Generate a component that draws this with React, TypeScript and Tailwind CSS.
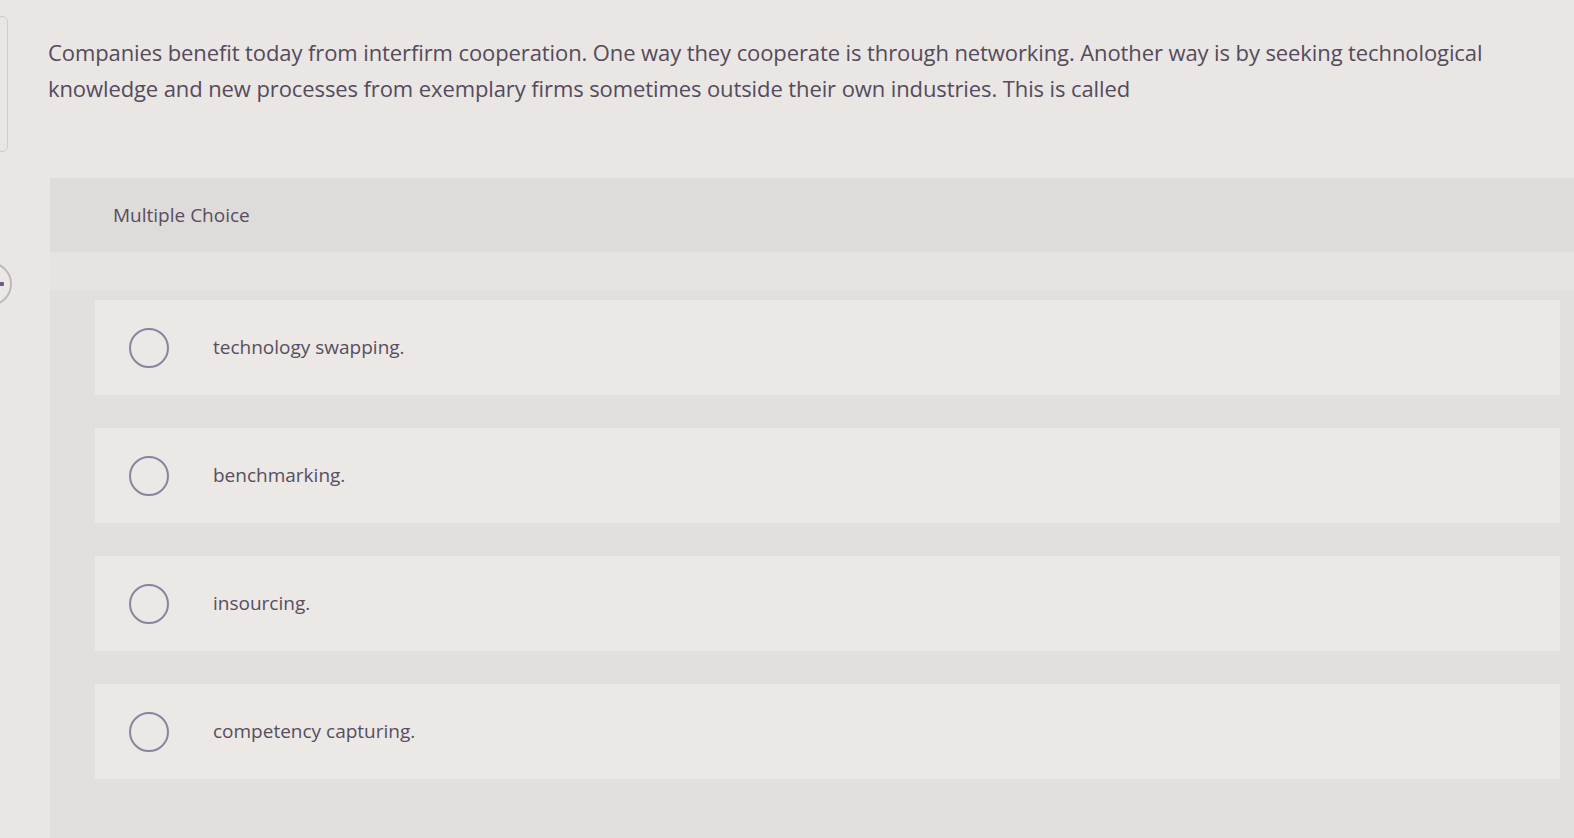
import React from 'react';

const options = [
    'technology swapping.',
    'benchmarking.',
    'insourcing.',
    'competency capturing.',
];

const Radio: React.FC = () => (
    <span className="block w-[40px] h-[40px] rounded-full border-2 border-[#8b84a0] shrink-0" />
);

export default function App() {
    return (
        <div
            className="relative w-full h-[838px] overflow-hidden bg-[#e9e6e4] text-[#544b5c]"
            style={{ fontFamily: '"Open Sans", Lato, sans-serif' }}
        >
            {/* left edge bits of the page behind */}
            <div className="absolute left-[-20px] top-[16px] w-[28px] h-[136px] rounded-[6px] border border-[#cfcbcb]" />
            <div className="absolute left-[-32px] top-[262px] w-[44px] h-[44px] rounded-full border-2 border-[#bdb8b9] bg-[#ebe8e6] flex items-center justify-end pr-[6px]">
                <span className="block w-[7px] h-[4px] bg-[#6c5a93] rounded-[1px]" />
            </div>

            <div className="pl-[48px] pt-[34px]">
                <p className="text-[22px] leading-[36px] w-[1480px] tracking-[-0.1px]">
                    Companies benefit today from interfirm cooperation. One way they cooperate is through networking. Another way is by seeking technological knowledge and new processes from exemplary firms sometimes outside their own industries. This is called
                </p>
            </div>

            <div className="ml-[50px] mt-[72px] bg-[#e2dfdd]">
                <div className="h-[74px] flex items-center pl-[63px] bg-[#dedbd9]">
                    <span className="text-[19px] text-[#574e5f]">Multiple Choice</span>
                </div>
                <div className="bg-[#e6e3e1] h-[38px]" />
                <div className="pl-[45px] pr-[14px] pt-[10px] flex flex-col gap-[33px] pb-[60px]">
                    {options.map((o, idx) => (
                        <div key={idx} className="h-[95px] bg-[#ebe8e6] flex items-center pl-[34px]">
                            <Radio />
                            <span className="ml-[44px] text-[19px] text-[#574e5f]">{o}</span>
                        </div>
                    ))}
                </div>
            </div>
        </div>
    );
}
